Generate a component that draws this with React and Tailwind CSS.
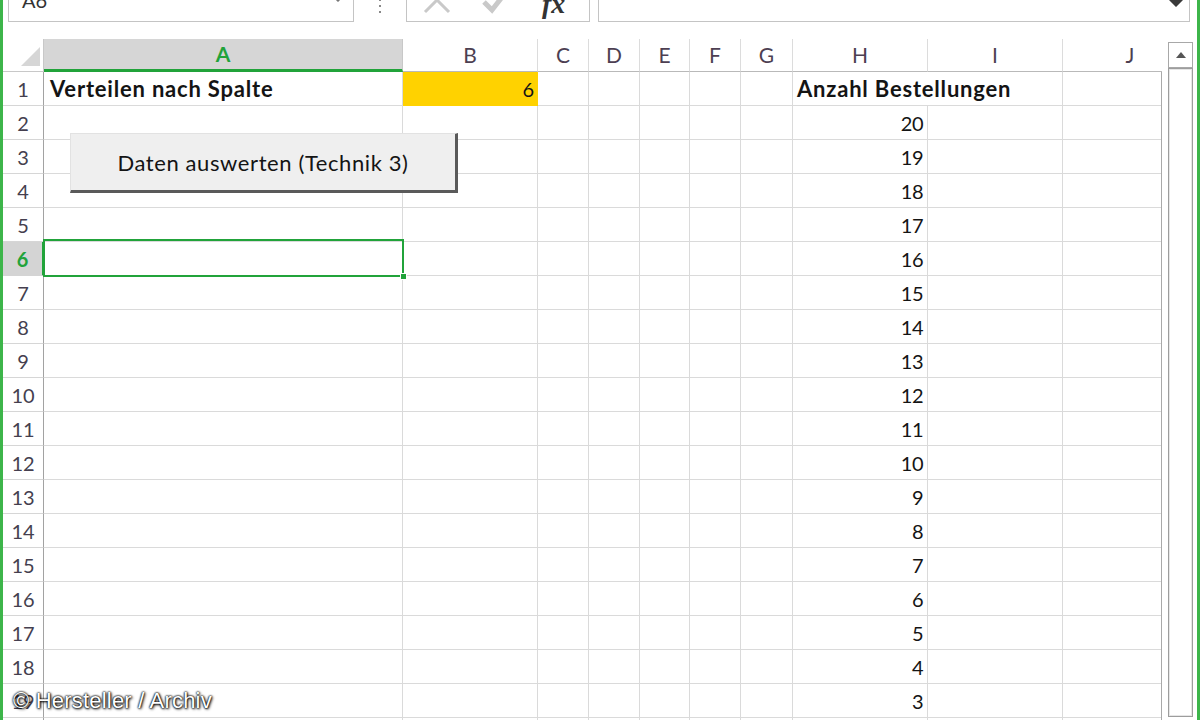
import React from "react";

const COLS = ["A", "B", "C", "D", "E", "F", "G", "H", "I", "J"];
const ROWS = Array.from({ length: 20 }, (_, i) => i + 1);
const ACTIVE_ROW = 6;

// H column holds the order counts, 20 down to 3
const orders = (r) => (r >= 2 ? String(22 - r) : "");

const gridCols =
  "grid grid-cols-[41px_359px_135px_51px_51px_50px_51px_52px_135px_135px_135px]";

function FormulaBar() {
  return (
    <div className="h-[22px] overflow-hidden flex items-end">
      {/* name box */}
      <div className="ml-[5px] w-[346px] h-[36px] shrink-0 border border-[#c4c4c4] bg-white relative">
        <span className="absolute left-[13px] top-[3px] text-[20px] leading-none text-[#333]">A6</span>
        <svg className="absolute left-[324px] top-[9px]" width="10" height="6" viewBox="0 0 10 6">
          <path d="M1 1 L5 5 L9 1" fill="none" stroke="#777" strokeWidth="1.5" />
        </svg>
      </div>
      {/* drag handle dots */}
      <div className="w-[52px] h-[36px] shrink-0 flex flex-col items-center justify-end gap-[4px] pb-[9px]">
        <span className="w-[2px] h-[2px] bg-[#888]" />
        <span className="w-[2px] h-[2px] bg-[#888]" />
        <span className="w-[2px] h-[2px] bg-[#888]" />
      </div>
      {/* cancel / enter / fx */}
      <div className="w-[184px] h-[36px] shrink-0 border border-[#c4c4c4] bg-white flex items-end pb-[7px] pl-[15px]">
        <svg width="30" height="28" viewBox="0 0 30 28">
          <path d="M3 2 L27 26 M27 2 L3 26" stroke="#c9c9c9" strokeWidth="3" fill="none" />
        </svg>
        <svg className="ml-[30px]" width="26" height="26" viewBox="0 0 26 26">
          <path d="M2 14 L10 22 L24 4" stroke="#c9c9c9" strokeWidth="5" fill="none" />
        </svg>
        <span className="ml-[34px] mb-[-4px] font-['Liberation_Serif',serif] italic font-bold text-[28px] leading-none text-[#333]">
          fx
        </span>
      </div>
      {/* formula input */}
      <div className="ml-[8px] w-[592px] h-[36px] shrink-0 border border-[#c4c4c4] bg-white relative">
        <svg className="absolute right-[2px] top-[4px]" width="22" height="18" viewBox="0 0 22 18">
          <path d="M2 7 L11 16 L20 7 L16 3 L11 8 L6 3 Z" fill="#3a3a3a" />
        </svg>
      </div>
    </div>
  );
}

function HeaderRow() {
  return (
    <div className={gridCols}>
      <div className="h-[33px] border-b border-r border-[#c8c8c8] relative">
        <svg className="absolute right-[3px] bottom-[5px]" width="19" height="19" viewBox="0 0 19 19">
          <path d="M19 0 L19 19 L0 19 Z" fill="#d6d6d6" />
        </svg>
      </div>
      {COLS.map((c) =>
        c === "A" ? (
          <div
            key={c}
            className="h-[33px] bg-[#d6d6d6] border-r border-r-[#c8c8c8] border-b-[3px] border-b-[#21a33a] flex items-center justify-center text-[21px] font-bold text-[#21a33a]"
          >
            {c}
          </div>
        ) : (
          <div
            key={c}
            className="h-[33px] border-r border-b border-r-[#dcdcdc] border-b-[#b9b9b9] flex items-center justify-center text-[21px] text-[#4d3f52]"
          >
            {c}
          </div>
        )
      )}
    </div>
  );
}

function Cell({ children, className = "" }) {
  return (
    <div className={`h-[34px] border-b border-r border-[#dadada] flex items-center text-[20px] text-[#141414] ${className}`}>
      {children}
    </div>
  );
}

function BodyRow({ r }) {
  const active = r === ACTIVE_ROW;
  return (
    <div className={gridCols}>
      <div
        className={`h-[34px] border-b border-r flex items-center justify-center text-[20px] ${
          active
            ? "bg-[#d4d4d4] border-b-[#d4d4d4] border-r-[#21a33a] border-r-2 font-bold text-[#21a33a]"
            : "border-b-[#d6d6d6] border-r-[#a2a2a2] text-[#453f4f]"
        }`}
      >
        {r}
      </div>

      {/* A */}
      {r === 1 ? (
        <Cell className="pl-[6px] font-bold text-[22px] tracking-[0.8px]">Verteilen nach Spalte</Cell>
      ) : active ? (
        <Cell className="relative">
          <div className="absolute left-[-1px] top-[-3px] right-[-2px] bottom-[-2px] border-[2.5px] border-[#21a33a] z-10" />
          <div className="absolute right-[-5px] bottom-[-5px] w-[7px] h-[7px] bg-[#21a33a] border border-white z-10" />
        </Cell>
      ) : (
        <Cell />
      )}

      {/* B */}
      {r === 1 ? (
        <Cell className="bg-[#ffd200] border-[#ffd200] justify-end pr-[3px]">6</Cell>
      ) : (
        <Cell />
      )}

      {/* C - G */}
      <Cell />
      <Cell />
      <Cell />
      <Cell />
      <Cell />

      {/* H (+ I on row 1) */}
      {r === 1 ? (
        <Cell className="col-span-2 pl-[4px] font-bold text-[22px] tracking-[0.8px]">Anzahl Bestellungen</Cell>
      ) : (
        <>
          <Cell className="justify-end pr-[4px] tracking-[-0.5px]">{orders(r)}</Cell>
          <Cell />
        </>
      )}

      {/* J */}
      <Cell />
    </div>
  );
}

export default function App() {
  return (
    <div className="w-[1200px] h-[720px] overflow-hidden bg-white relative border-x-[3px] border-[#3db54a] font-['Lato','Open_Sans',sans-serif]">
      <FormulaBar />
      <div className="h-[17px]" />

      <div className="flex">
        <div className="w-[1159px] shrink-0 relative">
          <div className="w-[1159px] overflow-hidden">
            <HeaderRow />
          </div>
          <div className="w-[1159px] overflow-hidden border-r border-[#a9a9a9]">
            {ROWS.map((r) => (
              <BodyRow key={r} r={r} />
            ))}
          </div>

          {/* form control button lying over A2:B4 */}
          <button className="absolute left-[67px] top-[94px] w-[388px] h-[60px] bg-[#efefef] border border-[#e2e2e2] border-r-[3px] border-b-[3px] border-r-[#5a5a5a] border-b-[#5a5a5a] text-[22px] tracking-[0.6px] text-[#141414] z-20">
            Daten auswerten (Technik 3)
          </button>
        </div>

        {/* vertical scrollbar */}
        <div className="ml-[6px] mt-[3px] flex flex-col">
          <div className="w-[25px] h-[26px] border border-[#a8a8a8] flex items-center justify-center">
            <svg width="10" height="6" viewBox="0 0 10 6">
              <path d="M0 6 L5 0 L10 6 Z" fill="#555" />
            </svg>
          </div>
          <div className="w-[25px] h-[649px] border border-[#9d9d9d] bg-white shadow-[inset_0_0_0_1px_#e6e6e6]" />
        </div>
      </div>

      <div className="absolute left-[10px] top-[684px] font-['Liberation_Sans',sans-serif] text-[22px] tracking-[0.2px] text-white [text-shadow:0_0_2px_#000,0_0_2px_#000,1px_1px_3px_#000]">
        © Hersteller / Archiv
      </div>
    </div>
  );
}
